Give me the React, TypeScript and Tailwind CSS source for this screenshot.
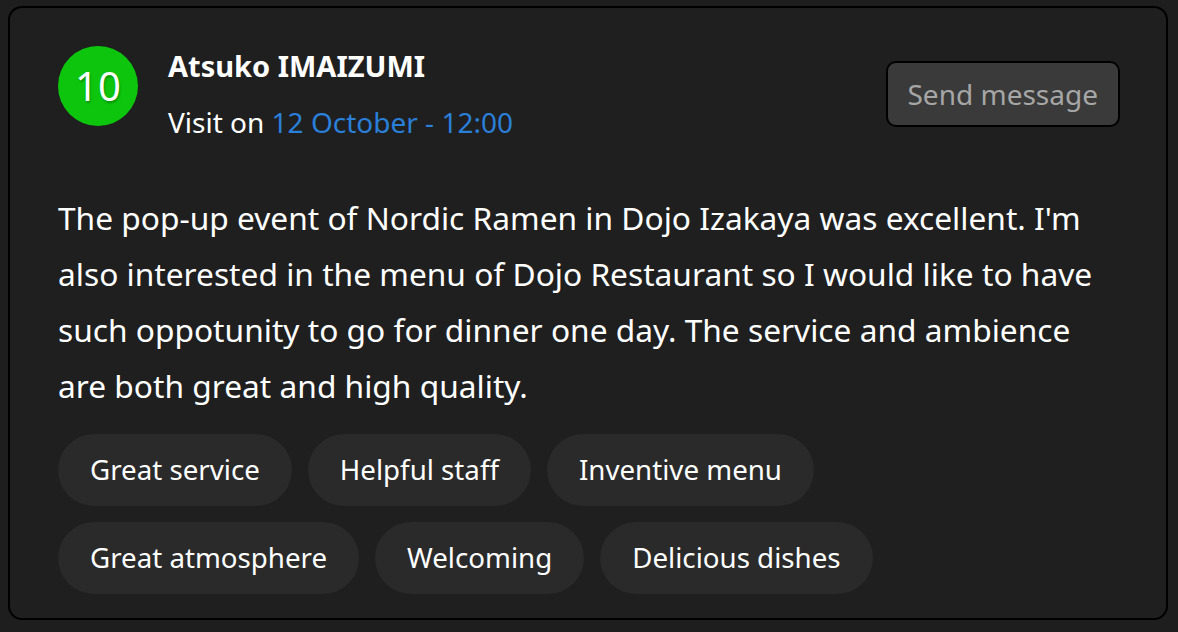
import React from 'react';

const tags: string[][] = [
    ['Great service', 'Helpful staff', 'Inventive menu'],
    ['Great atmosphere', 'Welcoming', 'Delicious dishes'],
];

const ReviewCard: React.FC = () => {
    return (
        <div className="h-[614px] rounded-[14px] border-2 border-black bg-[#1f1f1f] pl-12 pr-[46px] pt-[38px]">
            {/* header */}
            <div className="flex items-start">
                <div className="flex h-20 w-20 shrink-0 items-center justify-center rounded-full bg-[#0cc50c] text-[40px] text-white [text-shadow:1px_2px_2px_rgba(0,0,0,0.25)]">
                    10
                </div>
                <div className="ml-[30px] flex-1">
                    <div className="text-[29px] font-bold leading-[40px] text-white">Atsuko IMAIZUMI</div>
                    <div className="mt-[16px] text-[28px] leading-[40px] text-white">
                        Visit on <span className="text-[#2a7fd9]">12 October - 12:00</span>
                    </div>
                </div>
                <button className="mt-[15px] h-[66px] rounded-[10px] border-2 border-black bg-[#3a3a3a] px-5 text-[28px] text-[#a6a6a6]">
                    Send message
                </button>
            </div>

            {/* review */}
            <p className="mt-[48px] text-[31.7px] leading-[56px] text-white">
                The pop-up event of Nordic Ramen in Dojo Izakaya was excellent. I'm also interested in the menu of Dojo Restaurant so I would like to have such oppotunity to go for dinner one day. The service and ambience are both great and high quality.
            </p>

            {/* tags */}
            <div className="mt-[20px] flex flex-col gap-4">
                {tags.map((row, i) => (
                    <div key={i} className="flex gap-4">
                        {row.map((t) => (
                            <span key={t} className="flex h-[72px] items-center rounded-full bg-[#2a2a2a] px-8 text-[27.7px] text-white">
                                {t}
                            </span>
                        ))}
                    </div>
                ))}
            </div>
        </div>
    );
};

export default function App() {
    return (
        <div className="h-[632px] bg-[#1e1e1e] pb-3 pl-2 pr-[10px] pt-[6px] font-['Noto_Sans',sans-serif]">
            <ReviewCard />
        </div>
    );
}
